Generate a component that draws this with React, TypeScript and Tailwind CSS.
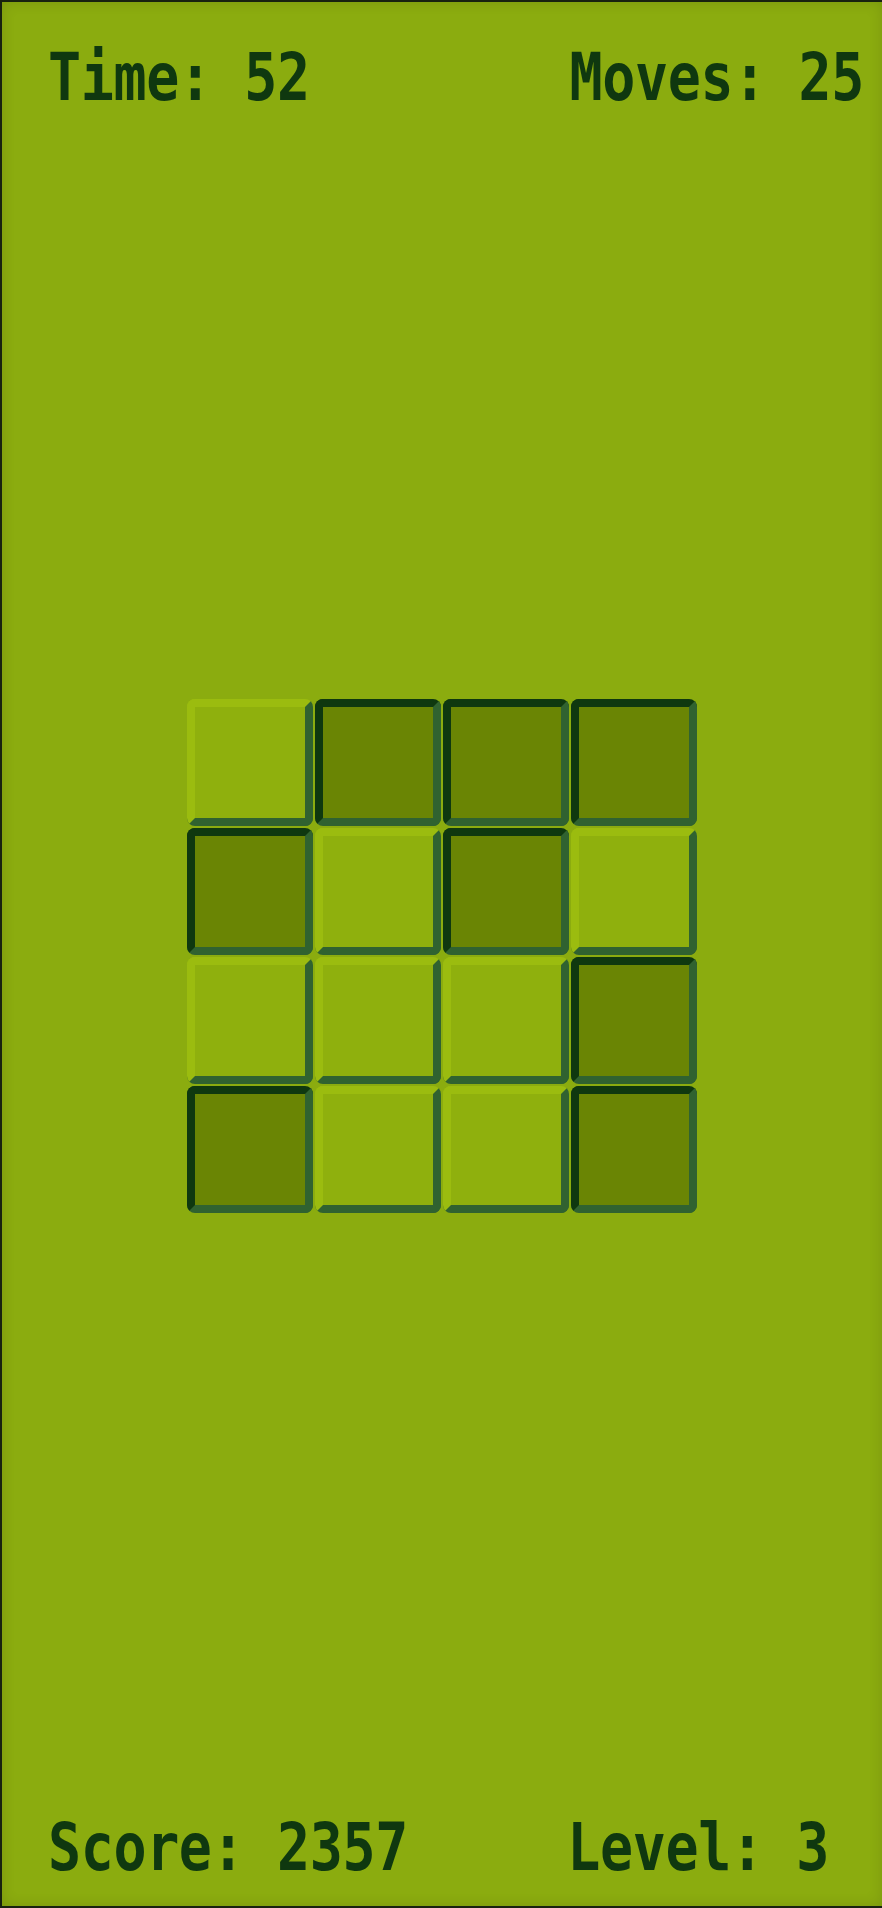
import React from "react";

const pattern = [
  [0, 1, 1, 1],
  [1, 0, 1, 0],
  [0, 0, 0, 1],
  [1, 0, 0, 1],
];

function Tile({ dark }: { dark: boolean }) {
  return dark ? (
    <div className="w-[126px] h-[127px] rounded-[8px] border-[8px] border-t-[#0f380f] border-l-[#0f380f] border-b-[#306230] border-r-[#306230] bg-[#6a8504]" />
  ) : (
    <div className="w-[126px] h-[127px] rounded-[8px] border-[8px] border-t-[#9bbc0f] border-l-[#9bbc0f] border-b-[#306230] border-r-[#306230] bg-[#8fb00d]" />
  );
}

function Label({ children }: { children: React.ReactNode }) {
  return (
    <span className="inline-block scale-y-[1.2] whitespace-pre text-[55px] leading-none font-bold tracking-[-0.4px] text-[#0f380f] [font-family:'DejaVu_Sans_Mono','Liberation_Mono',monospace]">
      {children}
    </span>
  );
}

export default function App() {
  return (
    <div className="w-full h-[1908px] bg-[#8bac0f] border-t-2 border-l-2 border-b-2 border-[#18220f] shadow-[inset_0_0_14px_rgba(0,0,0,0.12)] flex flex-col justify-between overflow-hidden">
      <div className="flex justify-between items-start pt-12 pl-[46px] pr-[18px]">
        <Label>Time: 52</Label>
        <Label>Moves: 25</Label>
      </div>

      <div className="flex justify-center mb-[14px]">
        <div className="grid grid-cols-4 gap-[2px]">
          {pattern.flat().map((v, i) => (
            <Tile key={i} dark={v === 1} />
          ))}
        </div>
      </div>

      <div className="flex justify-between items-end pb-[31px] pl-[46px] pr-[53px]">
        <Label>Score: 2357</Label>
        <Label>Level: 3</Label>
      </div>
    </div>
  );
}
